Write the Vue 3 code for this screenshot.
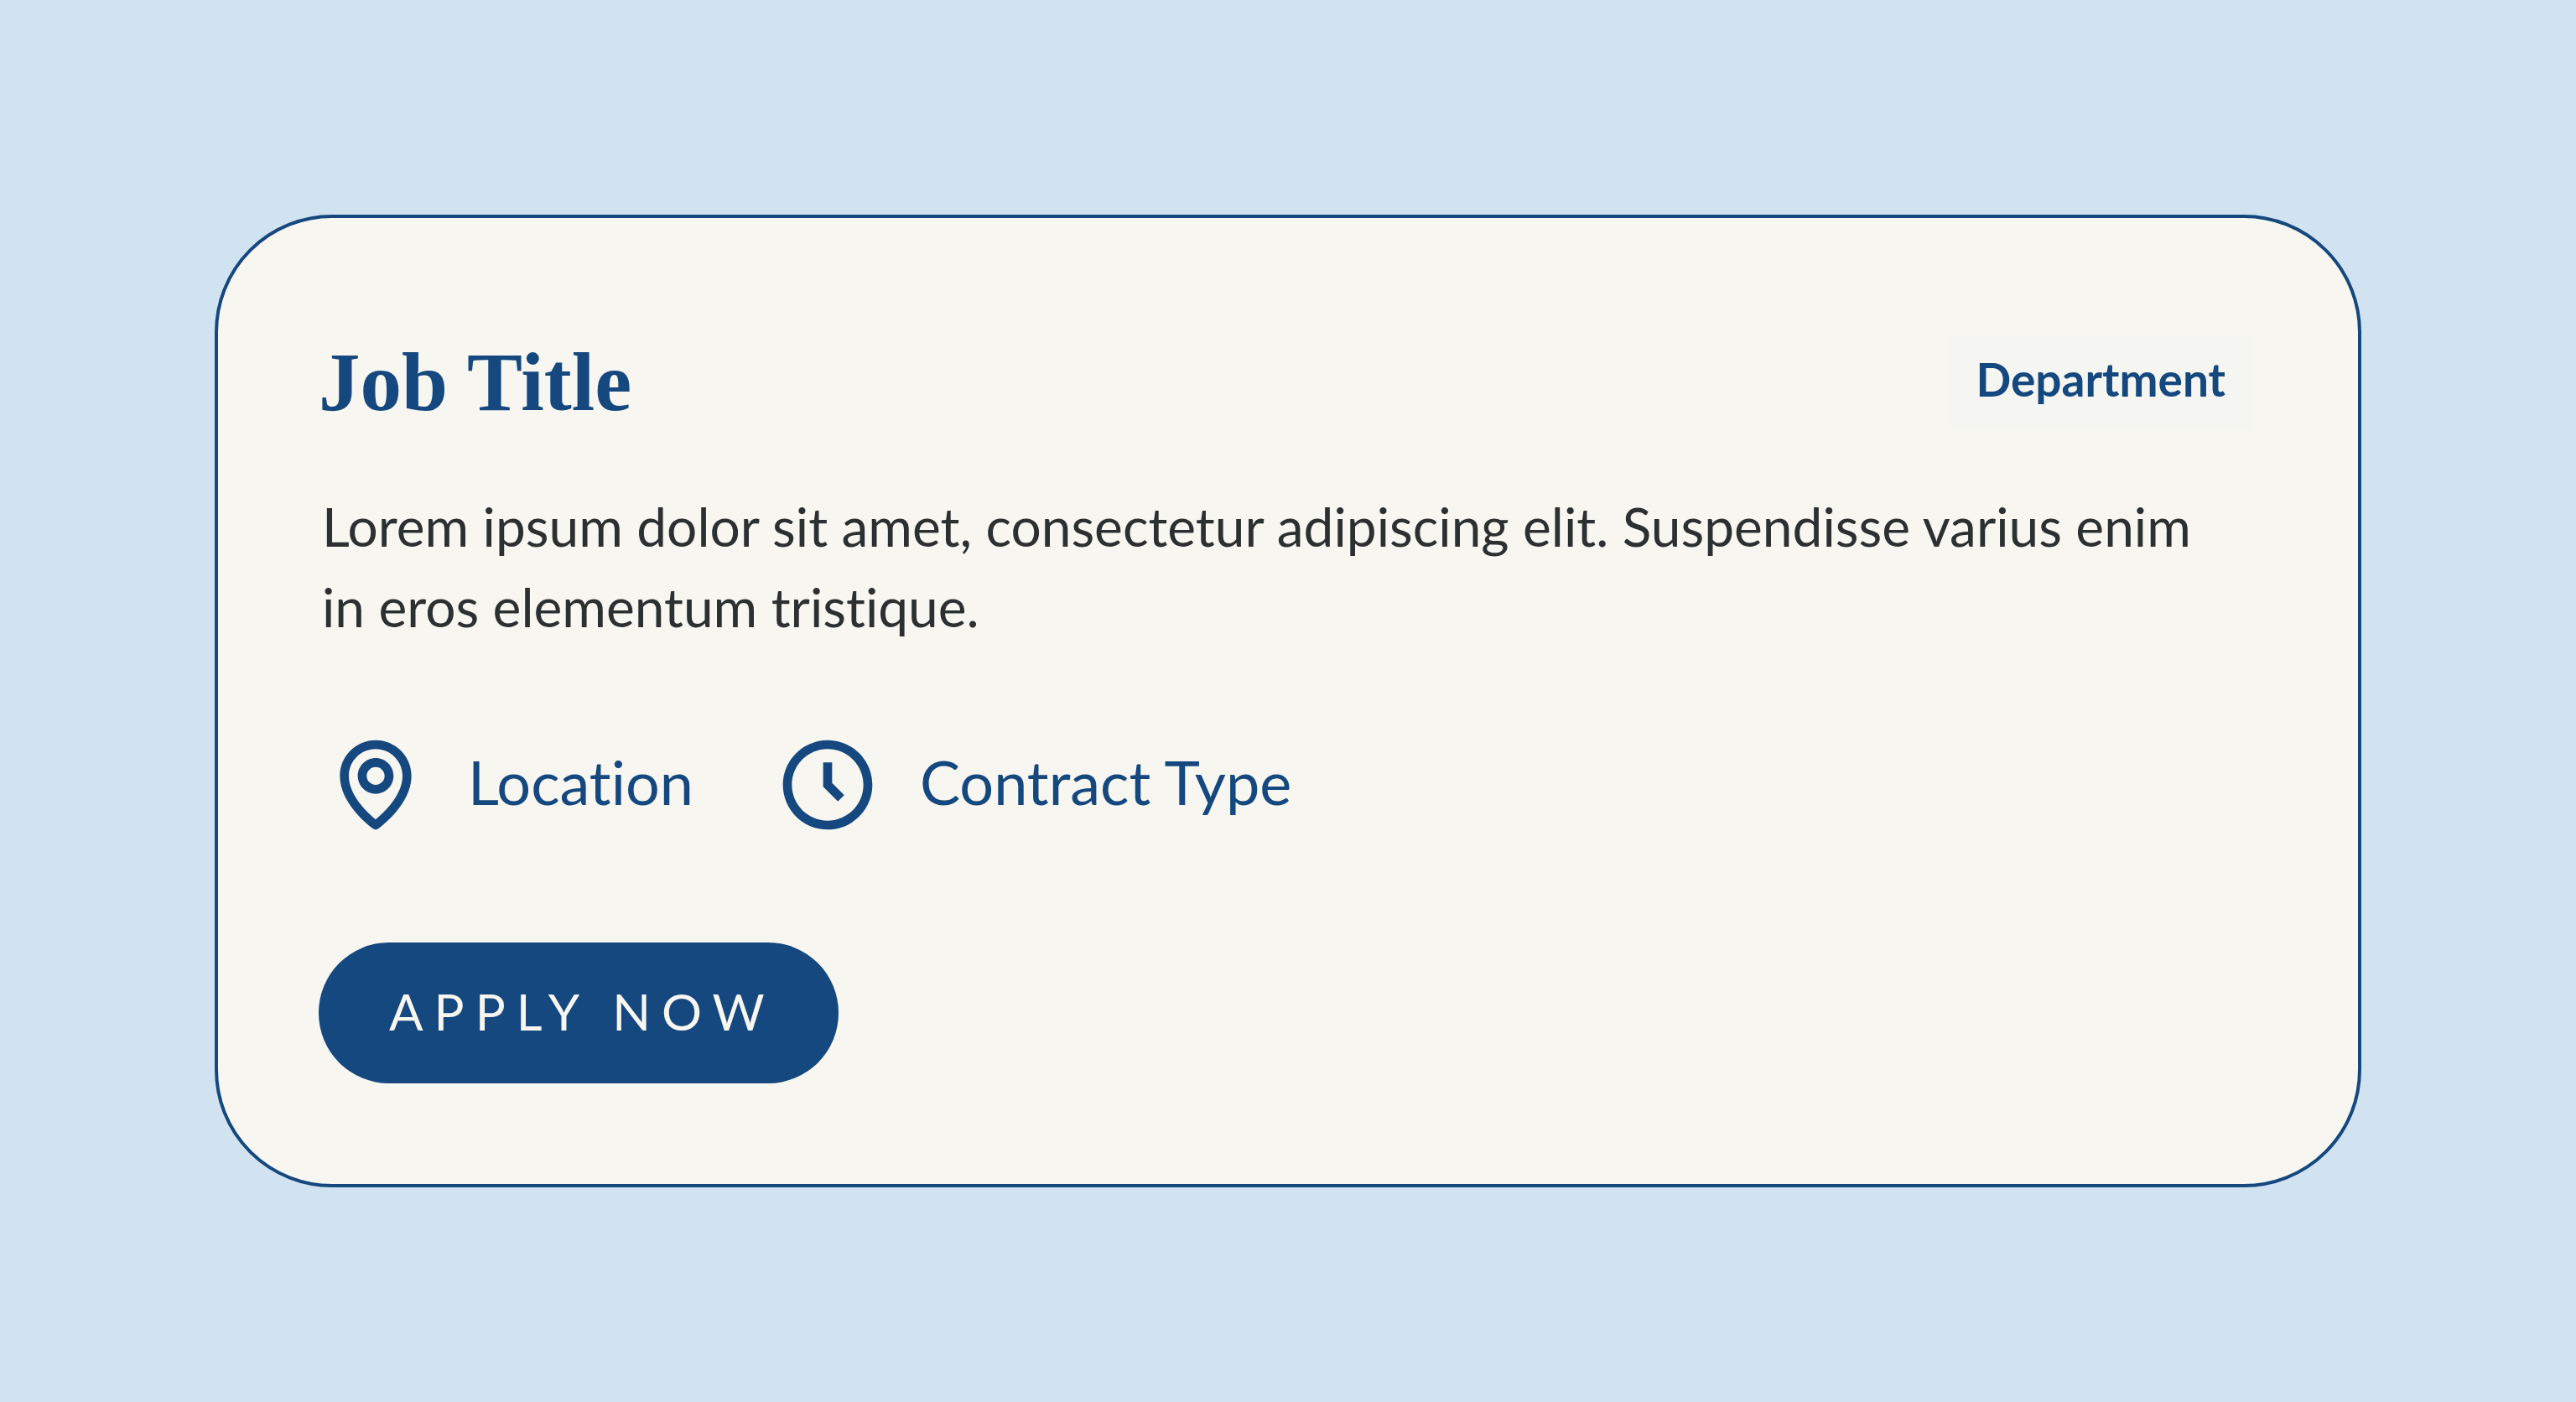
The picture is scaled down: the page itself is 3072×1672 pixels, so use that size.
<template>
  <main class="page">
    <article class="job-card">
      <header class="job-header">
        <h2 class="job-title">{{ job.title }}</h2>
        <span class="job-tag">{{ job.department }}</span>
      </header>
      <p class="job-description">{{ job.description }}</p>
      <ul class="job-meta">
        <li v-for="item in job.meta" :key="item.label" class="meta-item">
          <svg class="meta-icon" viewBox="0 0 24 24" aria-hidden="true">
            <path v-for="d in item.paths" :key="d" :d="d" />
          </svg>
          <span class="meta-label">{{ item.label }}</span>
        </li>
      </ul>
      <button type="button" class="apply-button">Apply now</button>
    </article>
  </main>
</template>

<script setup>
const job = {
  title: 'Job Title',
  department: 'Department',
  description:
    'Lorem ipsum dolor sit amet, consectetur adipiscing elit. Suspendisse varius enim in eros elementum tristique.',
  meta: [
    {
      label: 'Location',
      paths: [
        'M12 14c2.206 0 4-1.794 4-4s-1.794-4-4-4-4 1.794-4 4 1.794 4 4 4zm0-6c1.103 0 2 .897 2 2s-.897 2-2 2-2-.897-2-2 .897-2 2-2z',
        'M11.42 21.814a.998.998 0 0 0 1.16 0C12.884 21.599 20.029 16.44 20 10c0-4.411-3.589-8-8-8S4 5.589 4 9.995c-.029 6.445 7.116 11.604 7.42 11.819zM12 4c3.309 0 6 2.691 6 6.005.021 4.438-4.388 8.423-6 9.73-1.611-1.308-6.021-5.294-6-9.735 0-3.309 2.691-6 6-6z',
      ],
    },
    {
      label: 'Contract Type',
      paths: [
        'M12 2C6.486 2 2 6.486 2 12s4.486 10 10 10 10-4.486 10-10S17.514 2 12 2zm0 18c-4.411 0-8-3.589-8-8s3.589-8 8-8 8 3.589 8 8-3.589 8-8 8z',
        'M13 7h-2v5.414l3.293 3.293 1.414-1.414L13 11.586z',
      ],
    },
  ],
};
</script>

<style>
body {
  background-color: #d1e3f1;
}
</style>

<style scoped>
.page {
  padding: 256px;
  font-family: Lato, 'Open Sans', sans-serif;
  font-variant-ligatures: none;
}

.job-card {
  padding: 120px;
  border: 4px solid #15487e;
  border-radius: 140px;
  background-color: #f7f6f1;
  color: #15487e;
}

.job-header {
  display: flex;
  align-items: center;
  justify-content: space-between;
  margin-bottom: 48px;
}

.job-title {
  margin: 0;
  font-family: 'Liberation Serif', serif;
  font-size: 99px;
  font-weight: 700;
  line-height: 152px;
}

.job-tag {
  margin-right: 6px;
  padding: 12px 32px 20px;
  background-color: #f5f5f1;
  font-size: 55px;
  font-weight: 700;
  line-height: 80px;
}

.job-description {
  margin: 0 0 100px;
  padding: 0 32px 0 4px;
  color: #2c3031;
  font-size: 64px;
  line-height: 96px;
}

.job-meta {
  display: flex;
  flex-wrap: wrap;
  gap: 92px;
  margin: 0 0 124px;
  padding: 0;
  list-style: none;
}

.meta-item {
  display: flex;
  align-items: center;
  gap: 42px;
}

.meta-icon {
  width: 128px;
  height: 128px;
  padding: 0 4px;
  fill: currentColor;
}

.meta-label {
  padding-bottom: 8px;
  font-size: 72px;
  line-height: 120px;
}

.apply-button {
  display: block;
  padding: 34px 75px 38px 84px;
  border: none;
  border-radius: 84px;
  background-color: #15487e;
  color: #f7f6f1;
  font: inherit;
  font-size: 60px;
  line-height: 96px;
  letter-spacing: 13px;
  text-transform: uppercase;
  cursor: pointer;
}
</style>
